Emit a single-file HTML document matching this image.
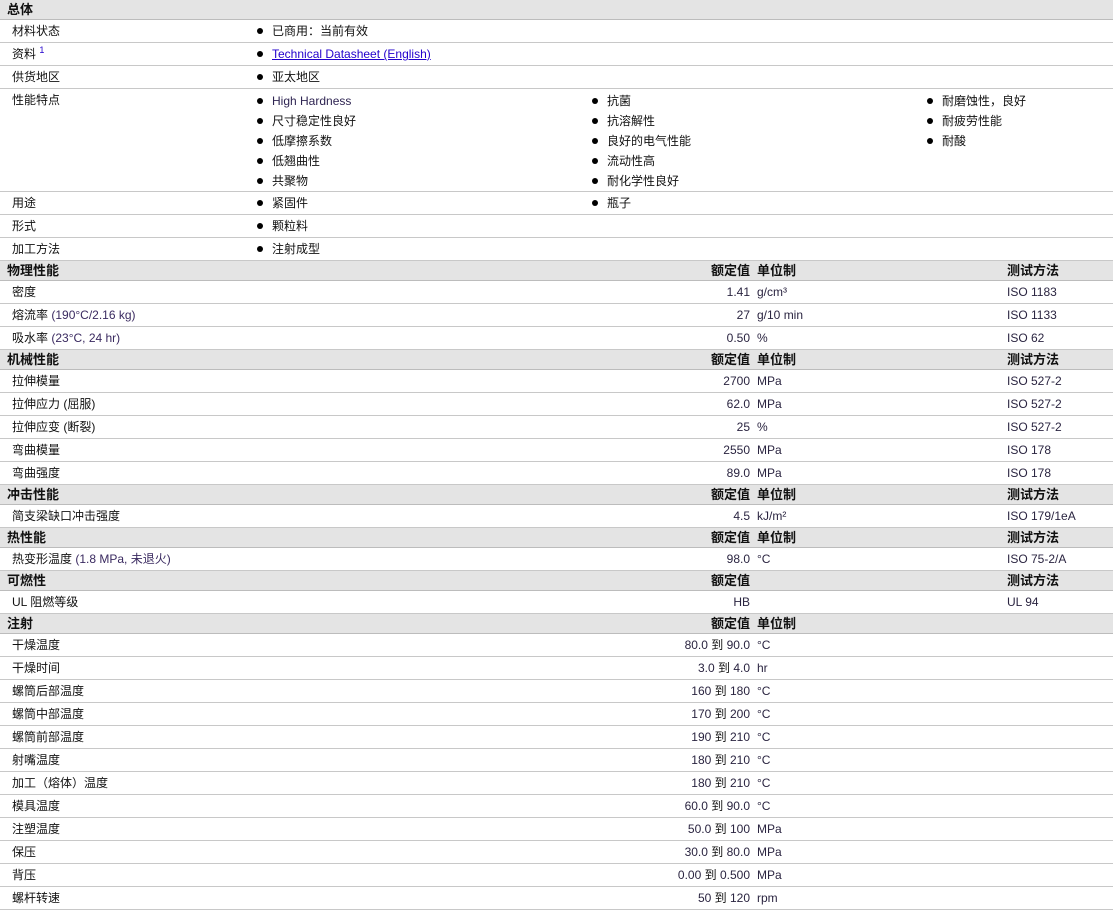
<!DOCTYPE html>
<html><head><meta charset="utf-8"><style>
*{margin:0;padding:0;box-sizing:border-box}
body{width:1113px;height:906px;overflow:hidden;background:#fff;font-family:"Liberation Sans","Noto Sans CJK SC",sans-serif;font-size:12px;color:#111}
.r{position:relative;height:23px;border-bottom:1px solid #c8c8c8}
.h{position:relative;height:20px;background:#e4e4e4;border-bottom:1px solid #bcbcbc;font-weight:bold;font-size:13px}
.r span,.h span{position:absolute;top:0;line-height:22px;white-space:nowrap}
.h span{line-height:19px}
.l{left:12px}.hl{left:7px}
.b{left:257px}.b2{left:592px}.b3{left:927px}
.b::before,.b2::before,.b3::before{content:"";display:inline-block;width:6px;height:6px;border-radius:50%;background:#000;margin-right:9px;vertical-align:1px}
.v{right:363px;text-align:right;color:#2a2440}
.u{left:757px;color:#2a2440}
.t{left:1007px;color:#2a2440}
.hv{right:363px}.hu{left:757px}.ht{left:1007px}
a{color:#2200cc}
.n{color:#3a2a60}
sup{line-height:0;font-size:9px;color:#2200cc;vertical-align:5px}
</style></head><body>
<div class="h" style="height:20px"><span class="hl">总体</span></div>
<div class="r"><span class="l">材料状态</span><span class="b">已商用：当前有效</span></div>
<div class="r"><span class="l">资料 <sup>1</sup></span><span class="b"><a href="#">Technical Datasheet (English)</a></span></div>
<div class="r"><span class="l">供货地区</span><span class="b">亚太地区</span></div>
<div class="r" style="height:103px"><span class="l">性能特点</span>
<span class="b" style="top:1px"><span style="position:static;color:#2e2452">High Hardness</span></span>
<span class="b" style="top:21px">尺寸稳定性良好</span>
<span class="b" style="top:41px">低摩擦系数</span>
<span class="b" style="top:61px">低翘曲性</span>
<span class="b" style="top:81px">共聚物</span>
<span class="b2" style="top:1px">抗菌</span>
<span class="b2" style="top:21px">抗溶解性</span>
<span class="b2" style="top:41px">良好的电气性能</span>
<span class="b2" style="top:61px">流动性高</span>
<span class="b2" style="top:81px">耐化学性良好</span>
<span class="b3" style="top:1px">耐磨蚀性，良好</span>
<span class="b3" style="top:21px">耐疲劳性能</span>
<span class="b3" style="top:41px">耐酸</span>
</div>
<div class="r"><span class="l">用途</span><span class="b">紧固件</span><span class="b2">瓶子</span></div>
<div class="r"><span class="l">形式</span><span class="b">颗粒料</span></div>
<div class="r"><span class="l">加工方法</span><span class="b">注射成型</span></div>

<div class="h"><span class="hl">物理性能</span><span class="hv">额定值</span><span class="hu">单位制</span><span class="ht">测试方法</span></div>
<div class="r"><span class="l">密度</span><span class="v">1.41</span><span class="u">g/cm³</span><span class="t">ISO 1183</span></div>
<div class="r"><span class="l">熔流率 <span class="n" style="position:static">(190°C/2.16 kg)</span></span><span class="v">27</span><span class="u">g/10 min</span><span class="t">ISO 1133</span></div>
<div class="r"><span class="l">吸水率 <span class="n" style="position:static">(23°C, 24 hr)</span></span><span class="v">0.50</span><span class="u">%</span><span class="t">ISO 62</span></div>

<div class="h"><span class="hl">机械性能</span><span class="hv">额定值</span><span class="hu">单位制</span><span class="ht">测试方法</span></div>
<div class="r"><span class="l">拉伸模量</span><span class="v">2700</span><span class="u">MPa</span><span class="t">ISO 527-2</span></div>
<div class="r"><span class="l">拉伸应力 (屈服)</span><span class="v">62.0</span><span class="u">MPa</span><span class="t">ISO 527-2</span></div>
<div class="r"><span class="l">拉伸应变 (断裂)</span><span class="v">25</span><span class="u">%</span><span class="t">ISO 527-2</span></div>
<div class="r"><span class="l">弯曲模量</span><span class="v">2550</span><span class="u">MPa</span><span class="t">ISO 178</span></div>
<div class="r"><span class="l">弯曲强度</span><span class="v">89.0</span><span class="u">MPa</span><span class="t">ISO 178</span></div>

<div class="h"><span class="hl">冲击性能</span><span class="hv">额定值</span><span class="hu">单位制</span><span class="ht">测试方法</span></div>
<div class="r"><span class="l">简支梁缺口冲击强度</span><span class="v">4.5</span><span class="u">kJ/m²</span><span class="t">ISO 179/1eA</span></div>

<div class="h"><span class="hl">热性能</span><span class="hv">额定值</span><span class="hu">单位制</span><span class="ht">测试方法</span></div>
<div class="r"><span class="l">热变形温度 <span class="n" style="position:static">(1.8 MPa, 未退火)</span></span><span class="v">98.0</span><span class="u">°C</span><span class="t">ISO 75-2/A</span></div>

<div class="h"><span class="hl">可燃性</span><span class="hv">额定值</span><span class="ht">测试方法</span></div>
<div class="r"><span class="l">UL 阻燃等级</span><span class="v">HB</span><span class="t">UL 94</span></div>

<div class="h"><span class="hl">注射</span><span class="hv">额定值</span><span class="hu">单位制</span></div>
<div class="r"><span class="l">干燥温度</span><span class="v">80.0 <span style="position:static;color:#111">到</span> 90.0</span><span class="u">°C</span></div>
<div class="r"><span class="l">干燥时间</span><span class="v">3.0 <span style="position:static;color:#111">到</span> 4.0</span><span class="u">hr</span></div>
<div class="r"><span class="l">螺筒后部温度</span><span class="v">160 <span style="position:static;color:#111">到</span> 180</span><span class="u">°C</span></div>
<div class="r"><span class="l">螺筒中部温度</span><span class="v">170 <span style="position:static;color:#111">到</span> 200</span><span class="u">°C</span></div>
<div class="r"><span class="l">螺筒前部温度</span><span class="v">190 <span style="position:static;color:#111">到</span> 210</span><span class="u">°C</span></div>
<div class="r"><span class="l">射嘴温度</span><span class="v">180 <span style="position:static;color:#111">到</span> 210</span><span class="u">°C</span></div>
<div class="r"><span class="l">加工（熔体）温度</span><span class="v">180 <span style="position:static;color:#111">到</span> 210</span><span class="u">°C</span></div>
<div class="r"><span class="l">模具温度</span><span class="v">60.0 <span style="position:static;color:#111">到</span> 90.0</span><span class="u">°C</span></div>
<div class="r"><span class="l">注塑温度</span><span class="v">50.0 <span style="position:static;color:#111">到</span> 100</span><span class="u">MPa</span></div>
<div class="r"><span class="l">保压</span><span class="v">30.0 <span style="position:static;color:#111">到</span> 80.0</span><span class="u">MPa</span></div>
<div class="r"><span class="l">背压</span><span class="v">0.00 <span style="position:static;color:#111">到</span> 0.500</span><span class="u">MPa</span></div>
<div class="r"><span class="l">螺杆转速</span><span class="v">50 <span style="position:static;color:#111">到</span> 120</span><span class="u">rpm</span></div>
</body></html>
